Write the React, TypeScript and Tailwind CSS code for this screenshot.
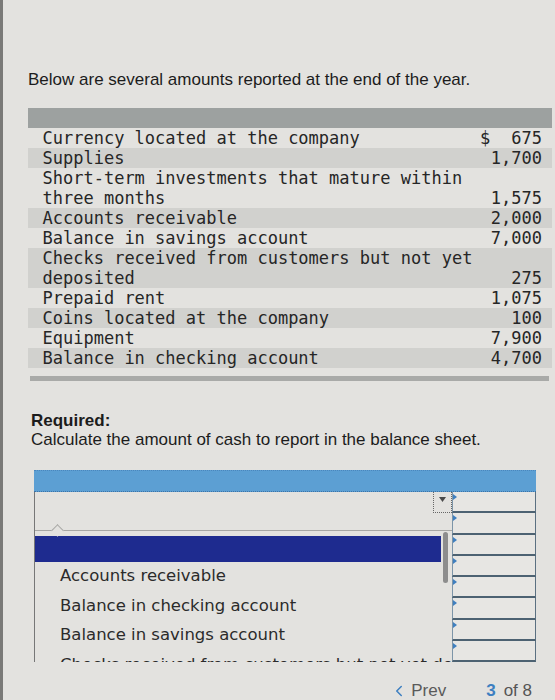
import { ChevronLeft } from "lucide-react";

const rows = [
  { label: "Currency located at the company", amount: "675", dollar: true, shade: false },
  { label: "Supplies", amount: "1,700", shade: true },
  { label: "Short-term investments that mature within three months", amount: "1,575", shade: false },
  { label: "Accounts receivable", amount: "2,000", shade: true },
  { label: "Balance in savings account", amount: "7,000", shade: false },
  { label: "Checks received from customers but not yet deposited", amount: "275", shade: true },
  { label: "Prepaid rent", amount: "1,075", shade: false },
  { label: "Coins located at the company", amount: "100", shade: true },
  { label: "Equipment", amount: "7,900", shade: false },
  { label: "Balance in checking account", amount: "4,700", shade: true },
];

const options = [
  "Accounts receivable",
  "Balance in checking account",
  "Balance in savings account",
  "Checks received from customers but not yet deposited",
];

const sans = "font-['Liberation_Sans',Arial,sans-serif]";

function Cell() {
  return (
    <div className="relative h-[21.25px] border-l border-r border-b-2 border-l-[#7d95a8] border-r-[#5b7081] border-b-[#4d6272] bg-[#e7e6e3]">
      <svg className="absolute left-0 top-[2px]" width="4" height="6" viewBox="0 0 4 6">
        <polygon points="0,0 4,3 0,6" fill="#3f7fbf" />
      </svg>
    </div>
  );
}

export default function App() {
  return (
    <div className="h-[700px] w-[555px] overflow-hidden border-l-[3px] border-[#7a7a78] bg-[#e3e2df]">
      <p className={`${sans} pl-[25px] pt-[70px] text-[17px] leading-[20px] text-[#1c1c1c]`}>
        Below are several amounts reported at the end of the year.
      </p>

      <div className="ml-[25px] mt-[18px] w-[524px]">
        <div className="h-[20px] bg-[#9da1a0]" />
        <div className="font-['DejaVu_Sans_Mono',monospace] text-[17px] leading-[20px] text-[#262626]">
          {rows.map((r) => (
            <div
              key={r.label}
              className={`flex items-end pl-[14.5px] pr-[10px] ${r.shade ? "bg-[#d1d1ce]" : ""}`}
            >
              <span className="w-[436px]">{r.label}</span>
              <span className="ml-auto flex w-[62px] justify-between">
                <span>{r.dollar ? "$" : ""}</span>
                <span>{r.amount}</span>
              </span>
            </div>
          ))}
        </div>
        <div className="ml-[2px] mt-[8px] h-[5px] w-[519px] bg-[#a9aaa8]" />
      </div>

      <div className={`${sans} mt-[30px] pl-[28px] text-[17px] leading-[19px] text-[#1c1c1c]`}>
        <p className="font-bold">Required:</p>
        <p>Calculate the amount of cash to report in the balance sheet.</p>
      </div>

      <div className="ml-[31px] mt-[21px] w-[502px]">
        <div className="h-[22px] border-t border-b border-dotted border-t-[#4a86bd] border-b-[#3d74a8] bg-[#5c9fd3]" />
        <div className="flex">
          <div className="relative h-[170px] w-[418px] border-l border-[#777]">
            <div className="flex h-[21px] justify-end">
              <div className="flex w-[19px] items-start justify-center border-b border-l border-r border-dotted border-[#666] pt-[5px]">
                <svg width="7" height="5" viewBox="0 0 7 5">
                  <polygon points="0,0 7,0 3.5,5" fill="#4a4a4a" />
                </svg>
              </div>
            </div>
            <div className="relative mt-[17px] h-[132px] border-t border-[#a6a6a4]">
              <div className="absolute left-[18px] top-[-5px] h-[9px] w-[9px] rotate-45 border-l border-t border-[#a6a6a4] bg-[#e3e2df]" />
              <div className="h-full overflow-hidden pt-[5px]">
                <div className="h-[26px] w-[406px] bg-[#1e2b8f]" />
                <div className="font-['DejaVu_Sans',Verdana,sans-serif] text-[16.5px] text-[#2b2b2b]">
                  {options.map((o) => (
                    <div key={o} className="flex h-[29.5px] items-center whitespace-nowrap pl-[25px]">
                      {o}
                    </div>
                  ))}
                </div>
              </div>
            </div>
            <div className="absolute left-[408px] top-[40px] h-[51px] w-[5px] rounded-full bg-[#8d8d8d]" />
          </div>
          <div className="w-[84px]">
            {Array.from({ length: 8 }).map((_, i) => (
              <Cell key={i} />
            ))}
          </div>
        </div>
      </div>

      <div className={`${sans} mt-[19px] flex justify-end pr-[23px] text-[17px] leading-[20px]`}>
        <div className="flex items-center text-[#5a5a5a]">
          <ChevronLeft size={18} strokeWidth={2} className="mr-[3px] text-[#3d7fc1]" />
          <span>Prev</span>
        </div>
        <div className="ml-[40px] text-[#555]">
          <span className="font-bold text-[#3d7fc1]">3</span>
          <span className="ml-[8px]">of 8</span>
        </div>
      </div>
    </div>
  );
}
